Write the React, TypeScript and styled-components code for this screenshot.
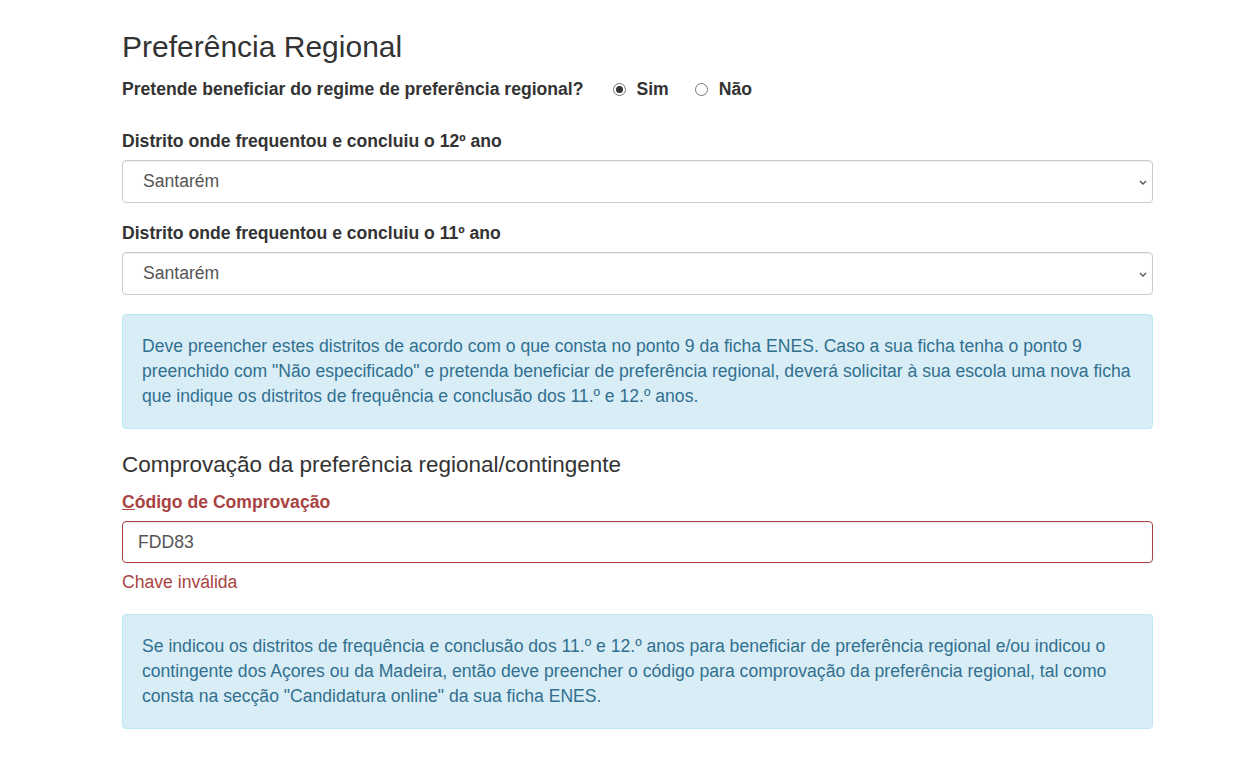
import React from "react";
import styled, { createGlobalStyle } from "styled-components";

const Global = createGlobalStyle`
  html, body { margin: 0; padding: 0; background: #fff; }
  body { font-family: "Liberation Sans", Arial, sans-serif; font-size: 17.6px; color: #333; }
  * { box-sizing: border-box; }
`;

const Container = styled.div`
  width: 1031px;
  margin: 0 0 0 122px;
  padding-top: 26px;
  padding-bottom: 37px;
`;

const Title = styled.h1`
  margin: 0 0 10px;
  font-size: 30px;
  font-weight: 400;
  line-height: 42px;
  color: #333;
`;

const SubTitle = styled.h3`
  margin: 0 0 12px;
  font-size: 22.5px;
  font-weight: 400;
  line-height: 30px;
  color: #333;
`;

const InlineRow = styled.div`
  display: flex;
  align-items: center;
  gap: 29px;
  height: 22px;
  margin-bottom: 31px;
`;

const Label = styled.label<{ $error?: boolean; $inline?: boolean }>`
  display: block;
  font-weight: 700;
  font-size: 17.6px;
  line-height: 20px;
  color: ${(p) => (p.$error ? "#a94442" : "#333")};
  margin-bottom: ${(p) => (p.$inline ? "0" : "9px")};
`;

const RadioGroup = styled.div`
  display: flex;
  align-items: center;
  gap: 26px;
`;

const RadioLabel = styled.label`
  display: flex;
  align-items: center;
  gap: 11px;
  font-weight: 700;
  font-size: 17.6px;
  line-height: 22px;
  color: #333;
`;

const RadioDot = styled.span<{ $checked?: boolean }>`
  width: 13px;
  height: 13px;
  border-radius: 50%;
  border: 1px solid #767676;
  display: inline-flex;
  align-items: center;
  justify-content: center;
  background: #fff;
  &::after {
    content: "";
    width: 7px;
    height: 7px;
    border-radius: 50%;
    background: ${(p) => (p.$checked ? "#333" : "transparent")};
  }
`;

const FormGroup = styled.div<{ $gap?: number }>`
  margin-bottom: ${(p) => (p.$gap ?? 20)}px;
`;

const SelectBox = styled.div`
  height: 43px;
  border: 1px solid #ccc;
  border-radius: 4px;
  display: flex;
  align-items: center;
  justify-content: space-between;
  padding: 0 4px 0 20px;
  color: #555;
  font-size: 17.6px;
  box-shadow: inset 0 1px 1px rgba(0, 0, 0, 0.075);
`;

const Input = styled.div`
  height: 42px;
  border: 1px solid #a94442;
  border-radius: 4px;
  display: flex;
  align-items: center;
  padding: 0 15px;
  color: #555;
  font-size: 17.6px;
  box-shadow: inset 0 1px 1px rgba(0, 0, 0, 0.075);
`;

const HelpError = styled.div`
  color: #a94442;
  font-size: 17.6px;
  line-height: 22px;
  margin-top: 8px;
`;

const Alert = styled.div`
  background: #d9edf7;
  border: 1px solid #bce8f1;
  border-radius: 4px;
  color: #31708f;
  padding: 19px;
  font-size: 17.6px;
  line-height: 25px;
  margin-bottom: 21px;
`;

const Chevron = () => (
  <svg width="10" height="10" viewBox="0 0 10 10">
    <path d="M2 4 L5 7 L8 4" fill="none" stroke="#555" strokeWidth="1.4" />
  </svg>
);

export default function App() {
  return (
    <>
      <Global />
      <Container>
        <Title>Preferência Regional</Title>
        <InlineRow>
          <Label $inline>Pretende beneficiar do regime de preferência regional?</Label>
          <RadioGroup>
            <RadioLabel>
              <RadioDot $checked />
              Sim
            </RadioLabel>
            <RadioLabel>
              <RadioDot />
              Não
            </RadioLabel>
          </RadioGroup>
        </InlineRow>
        <FormGroup>
          <Label>Distrito onde frequentou e concluiu o 12º ano</Label>
          <SelectBox>
            <span>Santarém</span>
            <Chevron />
          </SelectBox>
        </FormGroup>
        <FormGroup $gap={19}>
          <Label>Distrito onde frequentou e concluiu o 11º ano</Label>
          <SelectBox>
            <span>Santarém</span>
            <Chevron />
          </SelectBox>
        </FormGroup>
        <Alert>
          Deve preencher estes distritos de acordo com o que consta no ponto 9 da ficha ENES. Caso a sua ficha tenha o ponto 9
          preenchido com "Não especificado" e pretenda beneficiar de preferência regional, deverá solicitar à sua escola uma nova ficha
          que indique os distritos de frequência e conclusão dos 11.º e 12.º anos.
        </Alert>
        <SubTitle>Comprovação da preferência regional/contingente</SubTitle>
        <FormGroup $gap={21}>
          <Label $error>
            <u>C</u>ódigo de Comprovação
          </Label>
          <Input>FDD83</Input>
          <HelpError>Chave inválida</HelpError>
        </FormGroup>
        <Alert>
          Se indicou os distritos de frequência e conclusão dos 11.º e 12.º anos para beneficiar de preferência regional e/ou indicou o
          contingente dos Açores ou da Madeira, então deve preencher o código para comprovação da preferência regional, tal como
          consta na secção "Candidatura online" da sua ficha ENES.
        </Alert>
      </Container>
    </>
  );
}
